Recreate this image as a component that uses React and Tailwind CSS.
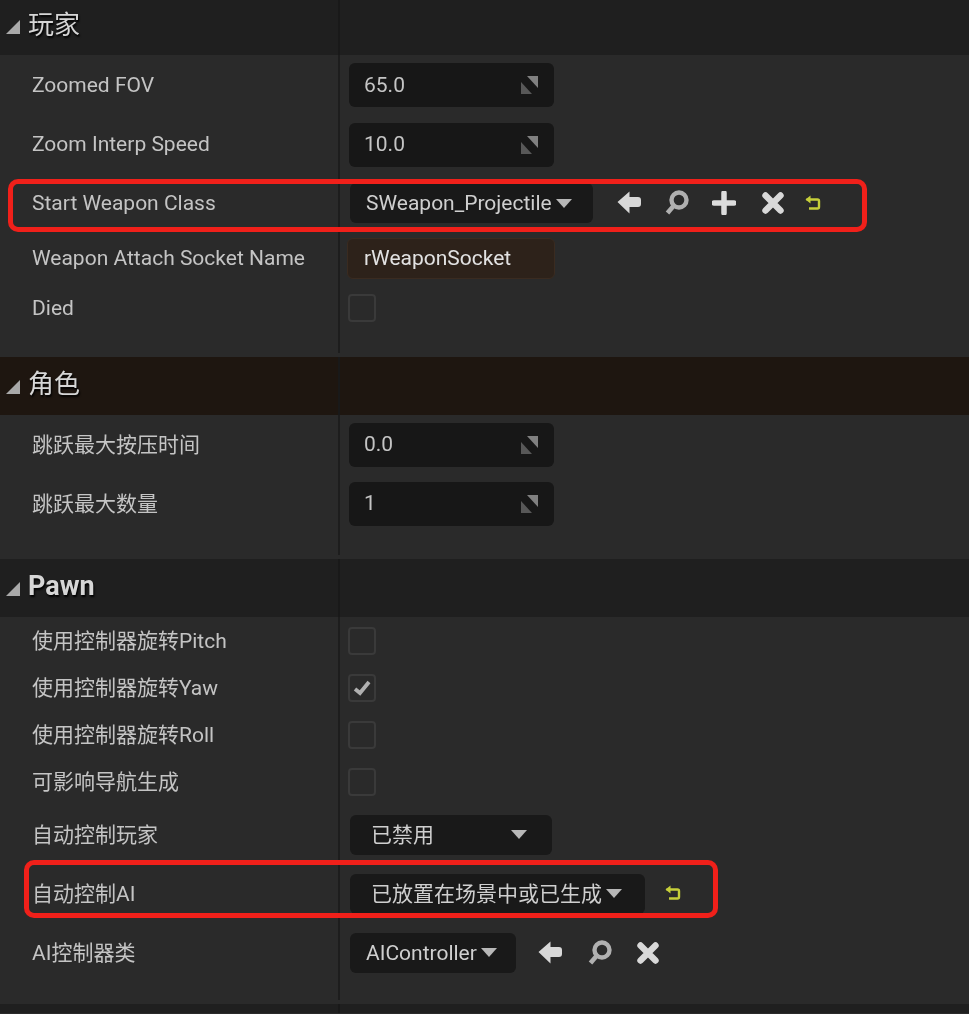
import React from 'react';

const ArrowIcon = () => (
    <svg width="26" height="26" viewBox="0 0 26 26" className="shrink-0">
        <path d="M13.5 1.5 L1.5 12 L13.5 23.5 L13.5 17 L22 17 Q25 17 25 14 L25 10 Q25 7 22 7 L13.5 7 Z" fill="#d8d8d8" />
    </svg>
);

const SearchIcon = () => (
    <svg width="26" height="26" viewBox="0 0 26 26" className="shrink-0">
        <circle cx="15" cy="10" r="7.5" fill="none" stroke="#b0b0b0" strokeWidth="4.4" />
        <path d="M9.5 16 L3.5 23" stroke="#b0b0b0" strokeWidth="4.6" />
    </svg>
);

const PlusIcon = () => (
    <svg width="24" height="24" viewBox="0 0 24 24" className="shrink-0">
        <path d="M12 2 V22 M2 12 H22" stroke="#dcdcdc" strokeWidth="5.5" strokeLinecap="round" />
    </svg>
);

const CloseIcon = () => (
    <svg width="24" height="24" viewBox="0 0 24 24" className="shrink-0">
        <path d="M4.5 4.5 L19.5 19.5 M19.5 4.5 L4.5 19.5" stroke="#d8d8d8" strokeWidth="6.4" strokeLinecap="round" />
    </svg>
);

const ResetIcon = () => (
    <svg width="16" height="17" viewBox="0 0 16 17" className="shrink-0">
        <path d="M1.5 4.5 H12.5 Q14 4.5 14 6 V12 Q14 13.5 12.5 13.5 H4" fill="none" stroke="#c6cf3a" strokeWidth="2.4" />
        <path d="M5.5 0.5 L0.5 4.5 L5.5 8.5 Z" fill="#c6cf3a" />
    </svg>
);

const SpinIcon = () => (
    <svg width="17" height="18" viewBox="0 0 17 18" className="shrink-0">
        <path d="M6 0 H17 V12 Z" fill="#808080" />
        <path d="M0 6 L11 18 H0 Z" fill="#585858" />
    </svg>
);

const Caret = () => (
    <svg width="16" height="9" viewBox="0 0 16 9" className="shrink-0">
        <path d="M0 0 H16 L8 9 Z" fill="#b8b8b8" />
    </svg>
);

const Triangle = ({ className }) => (
    <svg width="14" height="14" viewBox="0 0 14 14" className={`shrink-0 ${className}`}>
        <path d="M14 0 V14 H0 Z" fill="#a9a9a9" />
    </svg>
);

const Row = ({ h, label, cjk, children }) => (
    <div className={`flex ${h}`}>
        <div className="w-[340px] shrink-0 flex items-center pl-8 border-r-2 border-[#1d1d1d]">
            <span className={`text-[21px] text-[#c4c4c4] leading-none ${cjk ? 'pt-[2px]' : ''}`}>{label}</span>
        </div>
        <div className="flex-1 flex items-center pl-2">{children}</div>
    </div>
);

const Spacer = ({ h }) => (
    <div className={`flex ${h}`}>
        <div className="w-[340px] shrink-0 border-r-2 border-[#1d1d1d] mb-1"></div>
    </div>
);

const Header = ({ title, bold, bg, h, triangle, text }) => (
    <div className={`flex ${h} ${bg}`}>
        <div className="w-[340px] shrink-0 flex items-center gap-[8px] pl-[6px] border-r-2 border-[#191919]">
            <Triangle className={triangle} />
            <span className={`leading-none text-[#d6d6d6] [text-shadow:1px_2px_2px_#000] ${text} ${bold ? 'text-[27px] font-bold' : 'text-[26px]'}`}>{title}</span>
        </div>
    </div>
);

const NumberBox = ({ value }) => (
    <div className="ml-px w-[205px] h-[44px] rounded-md bg-[#171717] flex items-center justify-between pl-[15px] pr-[16px]">
        <span className="text-[21px] text-[#c4c4c4] leading-none">{value}</span>
        <SpinIcon />
    </div>
);

const Combo = ({ label, w, pl, between }) => (
    <div className={`ml-[2px] h-[40px] rounded-md bg-[#191919] flex items-center shrink-0 ${w} ${pl} ${between ? 'justify-between pr-[25px]' : 'gap-1'}`}>
        <span className="text-[21px] leading-none text-[#cfcfcf] pt-[1px]">{label}</span>
        <Caret />
    </div>
);

const Check = ({ checked }) => (
    <div className="w-[28px] h-[28px] rounded-[4px] border-2 border-[#3a3a3a] flex items-center justify-center">
        {checked && (
            <svg width="18" height="16" viewBox="0 0 18 16">
                <path d="M2 9 L7 13 L16 2" fill="none" stroke="#b0b0b0" strokeWidth="3.8" />
            </svg>
        )}
    </div>
);

export default function App() {
    return (
        <div className="relative w-[969px] h-[1014px] overflow-hidden bg-[#2a2a2a] blur-[0.4px] font-['Roboto','Noto_Sans_CJK_SC',sans-serif]">
            <Header title="玩家" h="h-[55px]" bg="bg-[#1f1f1f]" triangle="mb-[2px]" text="mb-[6px]" />
            <Row h="h-[60px]" label="Zoomed FOV"><NumberBox value="65.0" /></Row>
            <Row h="h-[59px]" label="Zoom Interp Speed"><NumberBox value="10.0" /></Row>
            <Row h="h-[58px]" label="Start Weapon Class">
                <Combo label="SWeapon_Projectile" w="w-[243px]" pl="pl-[16px]" />
                <div className="flex items-center ml-[23px]">
                    <ArrowIcon />
                    <div className="ml-[22px]"><SearchIcon /></div>
                    <div className="ml-[22px]"><PlusIcon /></div>
                    <div className="ml-[25px]"><CloseIcon /></div>
                    <div className="ml-[20px]"><ResetIcon /></div>
                </div>
            </Row>
            <Row h="h-[52px]" label="Weapon Attach Socket Name">
                <div className="-ml-[1px] w-[208px] h-[41px] rounded-md bg-[#2d221a] border border-[#3a2b20] flex items-center pl-4">
                    <span className="text-[21px] leading-none text-[#e2e2e2]">rWeaponSocket</span>
                </div>
            </Row>
            <Row h="h-[48px]" label="Died"><Check /></Row>
            <Spacer h="h-[25px]" />

            <Header title="角色" h="h-[58px]" bg="bg-[#1e1610]" triangle="mt-[2px]" text="mb-[4px]" />
            <Row h="h-[59px]" cjk label="跳跃最大按压时间"><NumberBox value="0.0" /></Row>
            <Row h="h-[59px]" cjk label="跳跃最大数量"><NumberBox value="1" /></Row>
            <Spacer h="h-[26px]" />

            <Header title="Pawn" bold h="h-[58px]" bg="bg-[#1f1f1f]" triangle="mt-[1px]" text="mb-[3px]" />
            <Row h="h-[47px]" cjk label="使用控制器旋转Pitch"><Check /></Row>
            <Row h="h-[47px]" cjk label="使用控制器旋转Yaw"><Check checked /></Row>
            <Row h="h-[47px]" cjk label="使用控制器旋转Roll"><Check /></Row>
            <Row h="h-[47px]" cjk label="可影响导航生成"><Check /></Row>
            <Row h="h-[59px]" cjk label="自动控制玩家">
                <Combo label="已禁用" w="w-[202px]" pl="pl-[21px]" between />
            </Row>
            <Row h="h-[59px]" cjk label="自动控制AI">
                <Combo label="已放置在场景中或已生成" w="w-[295px]" pl="pl-[21px]" />
                <div className="ml-[20px]"><ResetIcon /></div>
            </Row>
            <Row h="h-[59px]" cjk label="AI控制器类">
                <Combo label="AIController" w="w-[166px]" pl="pl-[16px]" />
                <div className="flex items-center ml-[21px]">
                    <ArrowIcon />
                    <div className="ml-[24px]"><SearchIcon /></div>
                    <div className="ml-[23px]"><CloseIcon /></div>
                </div>
            </Row>
            <Spacer h="h-[22px]" />
            <div className="flex h-[9px] bg-[#1f1f1f]">
                <div className="w-[340px] shrink-0 border-r-2 border-[#191919]"></div>
            </div>

            {/* red annotation boxes drawn over the panel */}
            <div className="absolute left-2 top-[179px] w-[859px] h-[53px] rounded-[10px] border-[5px] border-[#f0201a]"></div>
            <div className="absolute left-6 top-[860px] w-[694px] h-[58px] rounded-[10px] border-[5px] border-[#f0201a]"></div>
        </div>
    );
}
